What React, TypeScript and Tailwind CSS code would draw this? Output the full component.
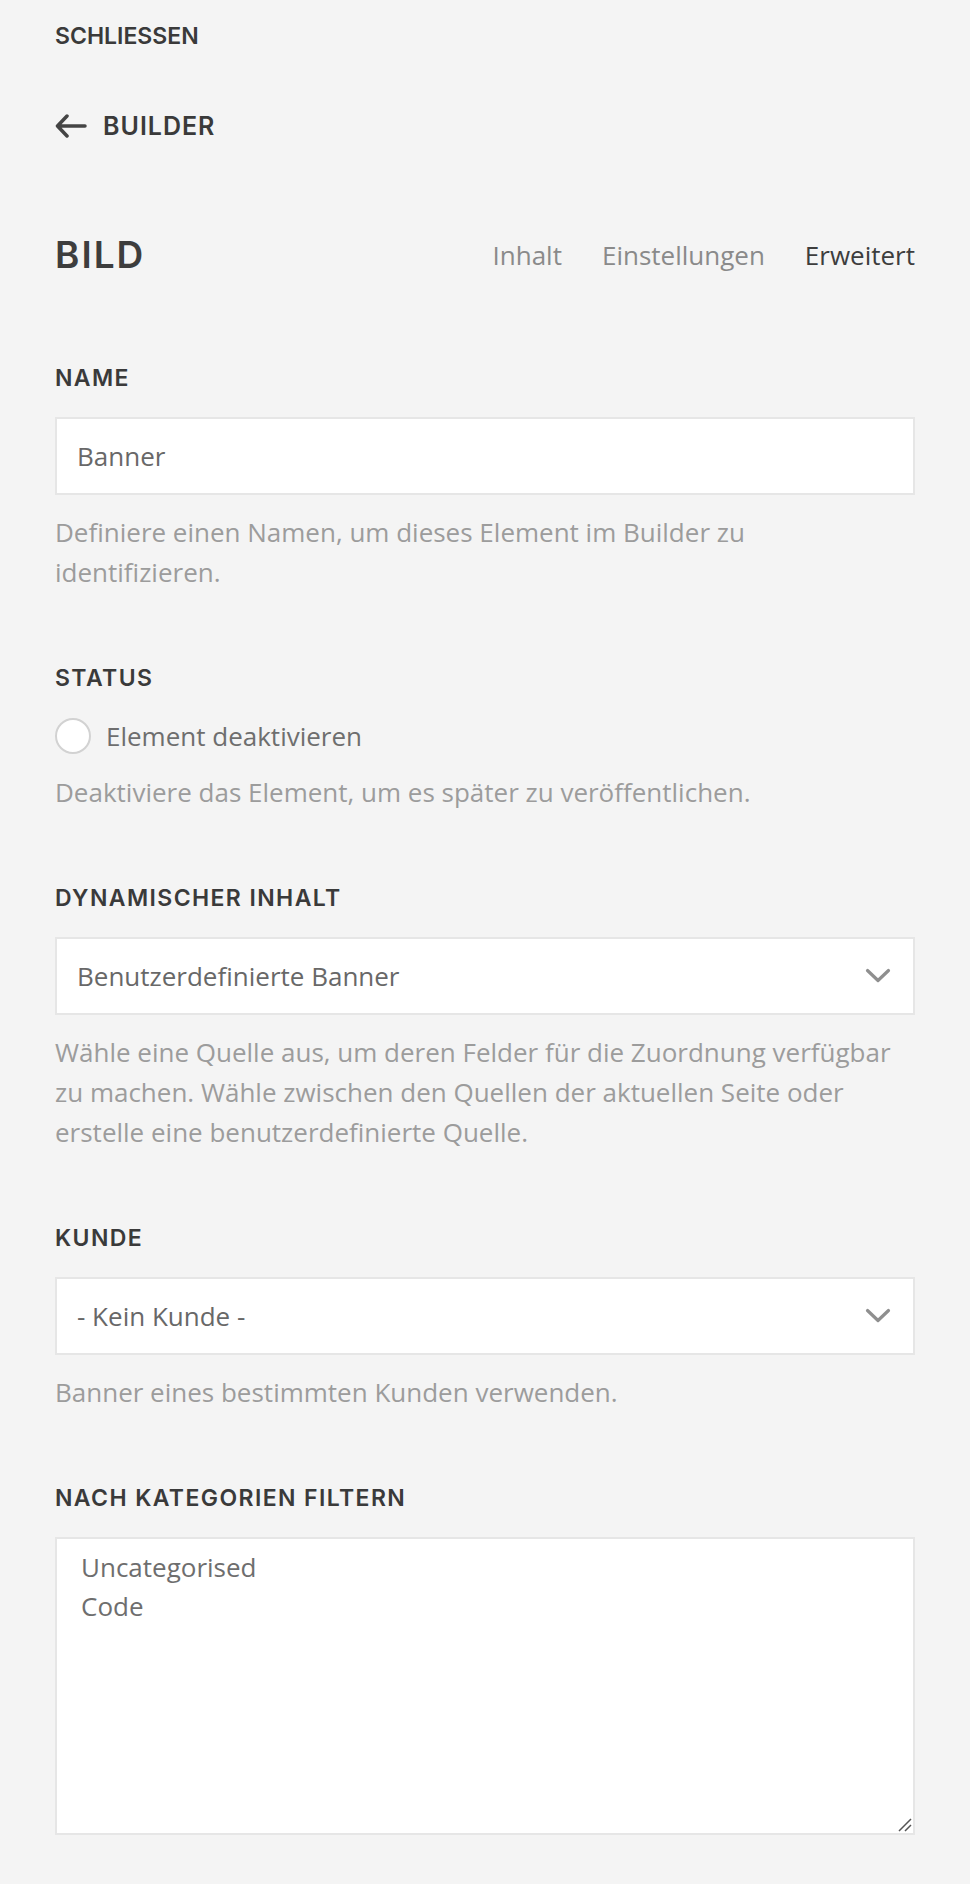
import React from 'react'

const label = "font-['Inter',sans-serif] font-semibold text-[23px] leading-[32px] tracking-[1.4px] text-[#3a3a3a] uppercase"
const desc = "text-[26px] leading-[40px] text-[#9c9c9c]"
const box = "h-[78px] border-2 border-[#e6e6e6] bg-white flex items-center pl-[20px] pr-[22px] text-[26px] text-[#686868]"

function Chevron() {
  return (
    <svg width="26" height="16" viewBox="0 0 26 16" fill="none" className="shrink-0">
      <polyline points="2.5,2.5 13,12.5 23.5,2.5" stroke="#8f8f8f" strokeWidth="3.2" strokeLinecap="round" strokeLinejoin="round" />
    </svg>
  )
}

function SelectBox({ value }: { value: string }) {
  return (
    <div className={`${box} justify-between mt-[23px]`}>
      <span>{value}</span>
      <Chevron />
    </div>
  )
}

export default function App() {
  return (
    <div className="min-h-[1884px] bg-[#f4f4f4] font-['Open_Sans',sans-serif] px-[55px] pt-[20px] pb-[49px]">
      {/* Top nav */}
      <div className="font-['Inter',sans-serif] font-semibold text-[23px] leading-[32px] text-[#3a3a3a]">SCHLIESSEN</div>
      <div className="flex items-center gap-[16px] mt-[58px] h-[32px]">
        <svg width="32" height="24" viewBox="0 0 32 24" fill="none">
          <path d="M30 12H3M12 2L2.5 12L12 22" stroke="#444" strokeWidth="3.5" strokeLinecap="round" strokeLinejoin="round" />
        </svg>
        <span className="font-['Inter',sans-serif] font-semibold text-[25px] leading-[32px] tracking-[1px] text-[#3a3a3a]">BUILDER</span>
      </div>

      {/* Header */}
      <div className="flex items-center justify-between mt-[89px] h-[48px]">
        <h1 className="font-['Inter',sans-serif] font-semibold text-[37px] leading-[48px] tracking-[2px] text-[#3d3d3d]">BILD</h1>
        <nav className="flex items-center gap-[40px] text-[26px] leading-[48px]">
          <span className="text-[#8a8a8a]">Inhalt</span>
          <span className="text-[#8a8a8a]">Einstellungen</span>
          <span className="text-[#3d3d3d]">Erweitert</span>
        </nav>
      </div>

      {/* Name */}
      <section className="mt-[83px]">
        <div className={label}>Name</div>
        <div className={`${box} mt-[23px]`}>Banner</div>
        <p className={`${desc} mt-[17px]`}>Definiere einen Namen, um dieses Element im Builder zu identifizieren.</p>
      </section>

      {/* Status */}
      <section className="mt-[70px]">
        <div className={label}>Status</div>
        <div className="flex items-center gap-[15px] mt-[22px] h-[40px]">
          <span className="w-[36px] h-[36px] rounded-full border-2 border-[#d2d2d2] bg-white shrink-0" />
          <span className="text-[26px] leading-[40px] text-[#6e6e6e]">Element deaktivieren</span>
        </div>
        <p className={`${desc} mt-[16px]`}>Deaktiviere das Element, um es später zu veröffentlichen.</p>
      </section>

      {/* Dynamic content */}
      <section className="mt-[70px]">
        <div className={label}>Dynamischer Inhalt</div>
        <SelectBox value="Benutzerdefinierte Banner" />
        <p className={`${desc} mt-[17px]`}>
          Wähle eine Quelle aus, um deren Felder für die Zuordnung verfügbar zu machen. Wähle zwischen den Quellen der aktuellen Seite oder erstelle eine benutzerdefinierte Quelle.
        </p>
      </section>

      {/* Kunde */}
      <section className="mt-[70px]">
        <div className={label}>Kunde</div>
        <SelectBox value="- Kein Kunde -" />
        <p className={`${desc} mt-[17px]`}>Banner eines bestimmten Kunden verwenden.</p>
      </section>

      {/* Kategorien */}
      <section className="mt-[70px]">
        <div className={label}>Nach Kategorien filtern</div>
        <div className="relative h-[298px] mt-[23px] border-2 border-[#e6e6e6] bg-white pt-[9px] pl-[24px] text-[26px] leading-[39px] text-[#6e6e6e]">
          <div>Uncategorised</div>
          <div>Code</div>
          <svg width="16" height="16" viewBox="0 0 16 16" fill="none" className="absolute right-[1px] bottom-[1px]">
            <path d="M3 15L15 3M9 15L15 9" stroke="#555" strokeWidth="1.5" />
          </svg>
        </div>
      </section>
    </div>
  )
}
